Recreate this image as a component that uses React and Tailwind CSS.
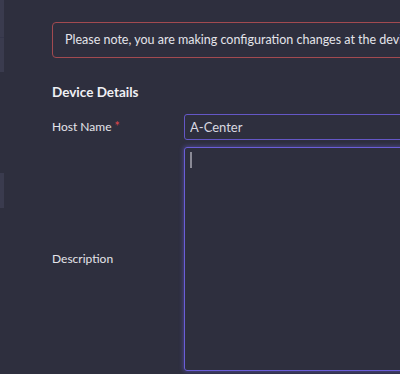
export default function App() {
  return (
    <div
      className="flex h-[374px] w-[400px] overflow-hidden bg-[#2e2f3e] text-[#e4e4ea]"
      style={{ fontFamily: 'Lato, "Open Sans", sans-serif' }}
    >
      {/* sidebar edge */}
      <div className="flex w-[4px] shrink-0 flex-col">
        <div className="h-[37px] bg-[#3a3b4e]" />
        <div className="h-[35px] border-t border-[#34354a] bg-[#3a3b4e]" />
        <div className="h-[101px]" />
        <div className="h-[35px] bg-[#3a3b4e]" />
      </div>

      <div className="w-[620px] shrink-0 pl-[48px] pt-[22px]">
        <div className="flex h-[36px] items-center rounded-[4px] border border-[#a24a50] px-[12px] text-[12.5px] whitespace-nowrap">
          Please note, you are making configuration changes at the device level.
        </div>

        <h2 className="mt-[24px] text-[13.5px] leading-[20px] font-bold text-[#f0f0f4]">Device Details</h2>

        <div className="mt-[12px] flex items-center">
          <label className="w-[132px] text-[12px]">
            Host Name <span className="text-[12.5px] text-[#e0474c]">*</span>
          </label>
          <input
            defaultValue="A-Center"
            className="h-[26px] flex-1 rounded-[3px] border border-[#6457c6] bg-transparent px-[5px] text-[13px] text-[#d8d8e0] outline-none"
          />
        </div>

        <div className="mt-[7px] flex items-center">
          <label className="w-[132px] text-[12px]">Description</label>
          <div className="relative flex-1">
            <textarea className="block h-[224px] w-full rounded-[3px] border border-[#6a5ed8] bg-transparent shadow-[0_0_4px_1px_rgba(106,94,216,0.45)] outline-none" />
            <div className="absolute top-[5px] left-[6px] h-[16px] w-[2px] bg-[#8a8a96]" />
          </div>
        </div>
      </div>
    </div>
  );
}
